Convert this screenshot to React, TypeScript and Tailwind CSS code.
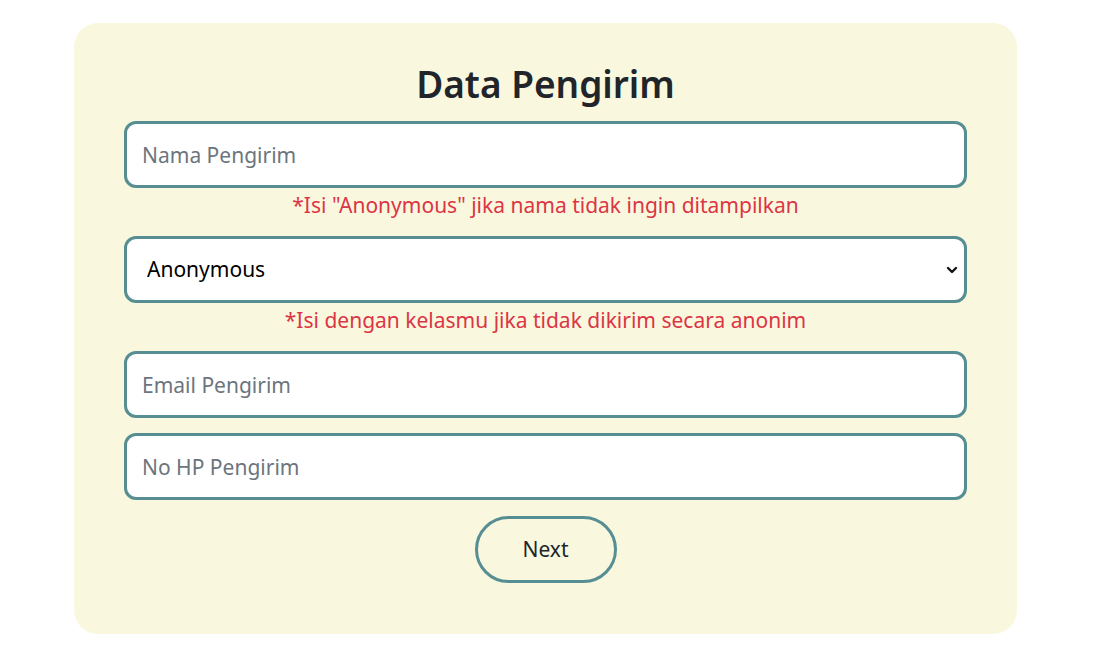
import React from 'react';

const font = { fontFamily: '"Noto Sans", "Open Sans", sans-serif' };

function Field({ placeholder }: { placeholder: string }) {
  return (
    <input
      type="text"
      placeholder={placeholder}
      className="block h-[67px] w-full rounded-xl border-[3px] border-[#578e93] bg-white px-[15px] text-[21px] text-[#212529] outline-none placeholder:text-[#6c757d]"
    />
  );
}

function Hint({ children }: { children: React.ReactNode }) {
  return <p className="mt-[2px] text-center text-[21px] leading-[30px] text-[#dc3545]">{children}</p>;
}

export default function App() {
  return (
    <div className="min-h-screen bg-white pt-[23px]" style={font}>
      <div className="ml-[74px] w-[943px] rounded-[24px] bg-[#f9f8df] px-[50px] pb-[51px] pt-[35px]">
        <h1 className="text-center text-[37px] font-semibold leading-[52px] text-[#212529]">Data Pengirim</h1>
        <div className="mt-[11px]">
          <Field placeholder="Nama Pengirim" />
          <Hint>*Isi "Anonymous" jika nama tidak ingin ditampilkan</Hint>
        </div>
        <div className="relative mt-[16px]">
          <select
            defaultValue="Anonymous"
            className="block h-[67px] w-full appearance-none rounded-xl border-[3px] border-[#578e93] bg-white px-[20px] text-[21px] text-black outline-none"
          >
            <option>Anonymous</option>
            <option>X IPA 1</option>
            <option>X IPA 2</option>
          </select>
          <svg
            className="pointer-events-none absolute right-[8px] top-[28px]"
            width="14"
            height="12"
            viewBox="0 0 14 12"
            fill="none"
            stroke="#111"
            strokeWidth="2.4"
            strokeLinecap="round"
            strokeLinejoin="round"
          >
            <path d="M3 4l4 4 4-4" />
          </svg>
          <Hint>*Isi dengan kelasmu jika tidak dikirim secara anonim</Hint>
        </div>
        <div className="mt-[16px]">
          <Field placeholder="Email Pengirim" />
        </div>
        <div className="mt-[15px]">
          <Field placeholder="No HP Pengirim" />
        </div>
        <div className="mt-[16px] flex justify-center">
          <button
            type="button"
            className="h-[67px] w-[142px] rounded-full border-[3px] border-[#578e93] bg-transparent text-[21px] text-[#212529]"
          >
            Next
          </button>
        </div>
      </div>
    </div>
  );
}
